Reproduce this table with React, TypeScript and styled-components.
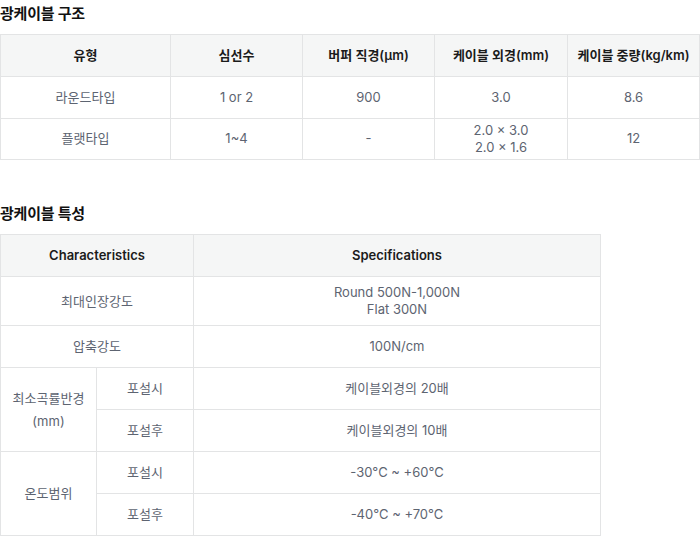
import React from "react";
import styled, { createGlobalStyle } from "styled-components";

const Global = createGlobalStyle`
  html, body { margin: 0; padding: 0; background: #fff; }
  body { font-family: Inter, "Noto Sans CJK KR", sans-serif; }
`;

const Page = styled.div`
  display: flex;
  flex-direction: column;
  gap: 44px;
  padding-top: 4px;
`;

const Section = styled.section`
  display: flex;
  flex-direction: column;
  gap: 10px;
`;

const Title = styled.h2`
  margin: 0;
  font-family: Inter, "Noto Sans CJK KR", sans-serif;
  font-size: 15px;
  font-weight: 700;
  line-height: 20px;
  color: #111;
  letter-spacing: -0.2px;
`;

const Table = styled.table<{ $width: number }>`
  width: ${(p) => p.$width}px;
  border-collapse: collapse;
  table-layout: fixed;
  border: 1px solid #e3e4e5;
`;

const Th = styled.th`
  height: 42px;
  padding: 0 6px;
  background: #f5f6f6;
  border: 1px solid #e3e4e5;
  font-size: 13px;
  font-weight: 600;
  line-height: 17px;
  color: #1b1b1b;
  text-align: center;
  box-sizing: border-box;
`;

const Td = styled.td<{ $h?: number; $pad?: number; $lh?: number }>`
  height: ${(p) => p.$h ?? 42}px;
  padding: ${(p) => p.$pad ?? 7}px 6px;
  border: 1px solid #e3e4e5;
  font-size: 13px;
  font-weight: 400;
  line-height: ${(p) => p.$lh ?? 17}px;
  color: #5d6471;
  text-align: center;
  vertical-align: middle;
  box-sizing: border-box;
`;

const structureCols = [170, 132, 132, 133, 132];

const structureRows: string[][] = [
  ["라운드타입", "1 or 2", "900", "3.0", "8.6"],
  ["플랫타입", "1~4", "-", "2.0 × 3.0\n2.0 × 1.6", "12"],
];

const multiline = (t: string) =>
  t.split("\n").map((line, i, arr) => (
    <React.Fragment key={i}>
      {line}
      {i < arr.length - 1 && <br />}
    </React.Fragment>
  ));

export default function App() {
  return (
    <>
      <Global />
      <Page>
        <Section>
          <Title>광케이블 구조</Title>
          <Table $width={700}>
            <colgroup>
              {structureCols.map((w, i) => (
                <col key={i} style={{ width: w }} />
              ))}
            </colgroup>
            <thead>
              <tr>
                <Th>유형</Th>
                <Th>심선수</Th>
                <Th>버퍼 직경(μm)</Th>
                <Th>케이블 외경(mm)</Th>
                <Th>케이블 중량(kg/km)</Th>
              </tr>
            </thead>
            <tbody>
              {structureRows.map((row, r) => (
                <tr key={r}>
                  {row.map((c, i) => (
                    <Td key={i} $h={41.5} $pad={3}>
                      {multiline(c)}
                    </Td>
                  ))}
                </tr>
              ))}
            </tbody>
          </Table>
        </Section>
        <Section>
          <Title>광케이블 특성</Title>
          <Table $width={600}>
            <colgroup>
              <col style={{ width: 96 }} />
              <col style={{ width: 97 }} />
              <col style={{ width: 407 }} />
            </colgroup>
            <thead>
              <tr>
                <Th colSpan={2}>Characteristics</Th>
                <Th>Specifications</Th>
              </tr>
            </thead>
            <tbody>
              <tr>
                <Td colSpan={2}>최대인장강도</Td>
                <Td>{multiline("Round 500N-1,000N\nFlat 300N")}</Td>
              </tr>
              <tr>
                <Td colSpan={2}>압축강도</Td>
                <Td>100N/cm</Td>
              </tr>
              <tr>
                <Td rowSpan={2} $lh={23}>
                  {multiline("최소곡률반경\n(mm)")}
                </Td>
                <Td>포설시</Td>
                <Td>케이블외경의 20배</Td>
              </tr>
              <tr>
                <Td>포설후</Td>
                <Td>케이블외경의 10배</Td>
              </tr>
              <tr>
                <Td rowSpan={2}>온도범위</Td>
                <Td>포설시</Td>
                <Td>-30°C ~ +60°C</Td>
              </tr>
              <tr>
                <Td>포설후</Td>
                <Td>-40°C ~ +70°C</Td>
              </tr>
            </tbody>
          </Table>
        </Section>
      </Page>
    </>
  );
}
